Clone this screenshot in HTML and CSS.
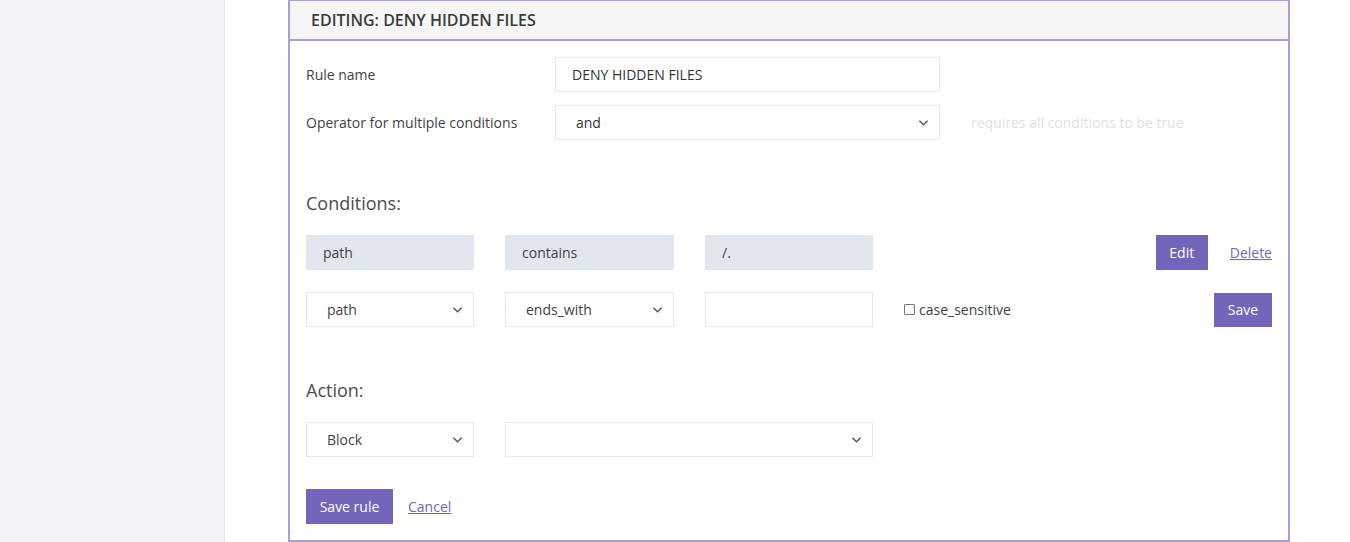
FILE: index.html
```html
<!DOCTYPE html>
<html>
<head>
<meta charset="utf-8">
<link rel="stylesheet" href="styles.css">
</head>
<body>
<div class="layout">
  <aside class="sidebar"></aside>
  <main class="main">
    <section class="card">
      <header class="card-head">EDITING: DENY HIDDEN FILES</header>
      <div class="card-body">
        <div class="form-row">
          <label class="form-label">Rule name</label>
          <div class="field input wide">DENY HIDDEN FILES</div>
        </div>
        <div class="form-row row-gap">
          <label class="form-label">Operator for multiple conditions</label>
          <div class="field select wide"><span>and</span><svg class="chev" viewBox="0 0 12 8"><path d="M1.5 1.5 6 6l4.5-4.5"/></svg></div>
          <span class="hint">requires all conditions to be true</span>
        </div>

        <h3 class="section-title conditions-title">Conditions:</h3>

        <div class="cond-row">
          <div class="cell static">path</div>
          <div class="cell static c2">contains</div>
          <div class="cell static">/.</div>
          <div class="spacer"></div>
          <button class="btn btn-edit">Edit</button>
          <a class="link delete" href="#">Delete</a>
        </div>

        <div class="cond-row row2">
          <div class="cell select"><span>path</span><svg class="chev" viewBox="0 0 12 8"><path d="M1.5 1.5 6 6l4.5-4.5"/></svg></div>
          <div class="cell select c2"><span>ends_with</span><svg class="chev" viewBox="0 0 12 8"><path d="M1.5 1.5 6 6l4.5-4.5"/></svg></div>
          <div class="cell input"></div>
          <label class="check"><span class="box"></span>case_sensitive</label>
          <div class="spacer"></div>
          <button class="btn btn-save">Save</button>
        </div>

        <h3 class="section-title action-title">Action:</h3>

        <div class="cond-row">
          <div class="cell select"><span>Block</span><svg class="chev" viewBox="0 0 12 8"><path d="M1.5 1.5 6 6l4.5-4.5"/></svg></div>
          <div class="cell select long"><span></span><svg class="chev" viewBox="0 0 12 8"><path d="M1.5 1.5 6 6l4.5-4.5"/></svg></div>
        </div>

        <div class="actions">
          <button class="btn btn-rule">Save rule</button>
          <a class="link" href="#">Cancel</a>
        </div>
      </div>
    </section>
  </main>
</div>
</body>
</html>
```

FILE: styles.css
```css
* { box-sizing: border-box; }
html, body { margin: 0; padding: 0; }
body {
  font-family: "Open Sans", "Noto Sans", sans-serif;
  font-size: 14px;
  color: #3f3f46;
  background: #fff;
  width: 1350px;
  height: 542px;
  overflow: hidden;
}
.layout { display: flex; height: 542px; }
.sidebar {
  width: 225px;
  flex: none;
  background: #f2f4f8;
  border-right: 1px solid #e5e9f1;
}
.main { flex: 1; padding-left: 63px; }
.card {
  width: 1002px;
  height: 542px;
  border: 2px solid #a99fdb;
  border-bottom-width: 0;
  background: #fff;
  position: relative;
}
.card::after {
  content: "";
  position: absolute;
  left: -2px; right: -2px; top: 538px;
  height: 2px;
  background: #a99fdb;
}
.card-head {
  height: 40px;
  background: #f6f6f7;
  border-bottom: 2px solid #a99fdb;
  padding-left: 21px;
  font-size: 16px;
  font-weight: 600;
  color: #3a3a3a;
  display: flex;
  align-items: center;
  margin-top: -1px;
}
.card-body { padding: 16px 15px 0 16px; }
.form-row { display: flex; align-items: center; height: 35px; }
.row-gap { margin-top: 13px; }
.form-label { width: 249px; flex: none; color: #3f3f46; }
.field {
  height: 35px;
  border: 1px solid #e5e8f0;
  display: flex;
  align-items: center;
  color: #333;
}
.wide { width: 385px; }
.input { padding-left: 16px; }
.select { padding-left: 20px; padding-right: 10px; justify-content: space-between; }
.chev { width: 11px; height: 8px; fill: none; stroke: #555; stroke-width: 1.5; }
.hint { margin-left: 31px; color: #dcdfe7; }

.section-title {
  margin: 0;
  font-size: 18px;
  font-weight: 400;
  color: #4b4b52;
  line-height: 24px;
}
.conditions-title { margin-top: 51px; }
.action-title { margin-top: 51px; }

.cond-row { display: flex; align-items: center; height: 35px; margin-top: 20px; }
.row2 { margin-top: 22px; }
.cell {
  width: 168px;
  height: 35px;
  margin-right: 31px;
  display: flex;
  align-items: center;
  flex: none;
  color: #3f3f46;
}
.cell.c2 { width: 169px; margin-right: 31px; }
.cell.long { width: 368px; }
.static { background: #e2e6ef; padding-left: 17px; }
.cell.select { border: 1px solid #e5e8f0; padding-left: 20px; padding-right: 10px; justify-content: space-between; }
.cell.input { border: 1px solid #e5e8f0; }
.spacer { flex: 1; }
.check { display: flex; align-items: center; color: #3f3f46; margin-top: -1px; }
.box {
  width: 11px; height: 11px;
  border: 1px solid #777;
  border-radius: 1px;
  margin-right: 4px;
  display: inline-block;
}
.btn {
  height: 35px;
  border: 0;
  background: #7266ba;
  color: #fff;
  font-family: inherit;
  font-size: 14px;
  padding: 0;
  cursor: pointer;
}
.btn-edit { width: 52px; }
.btn-save { width: 58px; height: 34px; margin-right: 1px; }
.link { color: #7266ba; text-decoration: underline; }
.delete { margin-left: 22px; margin-right: 1px; }
.actions { display: flex; align-items: center; margin-top: 32px; gap: 15px; }
.btn-rule { width: 87px; }
```
